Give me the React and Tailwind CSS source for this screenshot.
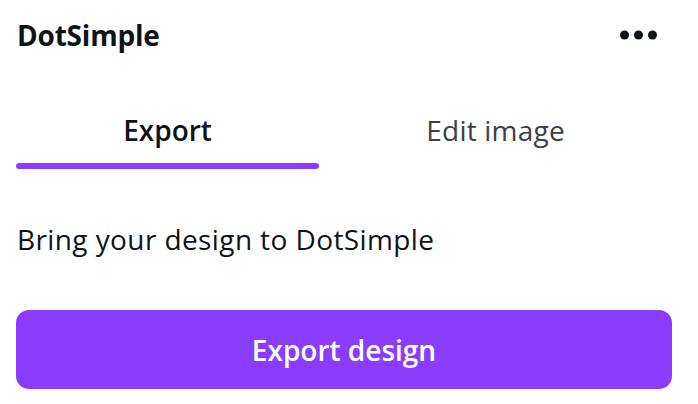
import React, { useState } from "react";

function Dots() {
  return (
    <svg width="38" height="10" viewBox="0 0 38 10" className="text-[#0e1318]">
      <circle cx="4.5" cy="5" r="4.5" fill="currentColor" />
      <circle cx="18.5" cy="5" r="4.5" fill="currentColor" />
      <circle cx="32.5" cy="5" r="4.5" fill="currentColor" />
    </svg>
  );
}

export default function App() {
  const [tab, setTab] = useState("export");

  const tabs = [
    { id: "export", label: "Export" },
    { id: "edit", label: "Edit image" },
  ];

  return (
    <div className="w-[698px] h-[404px] bg-white text-[#0e1318] font-['Open_Sans',sans-serif] overflow-hidden">
      <div className="flex items-center justify-between h-[69px] pl-[17px] pr-[40px]">
        <h1 className="text-[28px] font-bold leading-none tracking-[-0.2px]">DotSimple</h1>
        <button className="flex items-center">
          <Dots />
        </button>
      </div>

      <div className="px-[16px] w-[688px]">
        <div className="flex mt-[28px] h-[72px]">
          {tabs.map((t) => (
            <button
              key={t.id}
              onClick={() => setTab(t.id)}
              className="flex-auto flex flex-col"
            >
              <span
                className={`flex-1 flex items-center justify-center text-[28px] leading-none ${
                  tab === t.id ? "font-semibold text-[#0e1318]" : "text-[#3b4148] tracking-[0.2px]"
                }`}
              >
                {t.label}
              </span>
              <span
                className={`h-[6px] w-full rounded-full ${
                  tab === t.id ? "bg-[#8b3dff]" : "bg-transparent"
                }`}
              />
            </button>
          ))}
        </div>

        <p className="mt-[52px] pl-px text-[28px] leading-[37px] tracking-[0.4px]">
          Bring your design to DotSimple
        </p>

        <button className="mt-[52px] w-[656px] h-[79px] rounded-[13px] bg-[#8b3dff] text-white text-[28px] font-semibold">
          Export design
        </button>
      </div>
    </div>
  );
}
